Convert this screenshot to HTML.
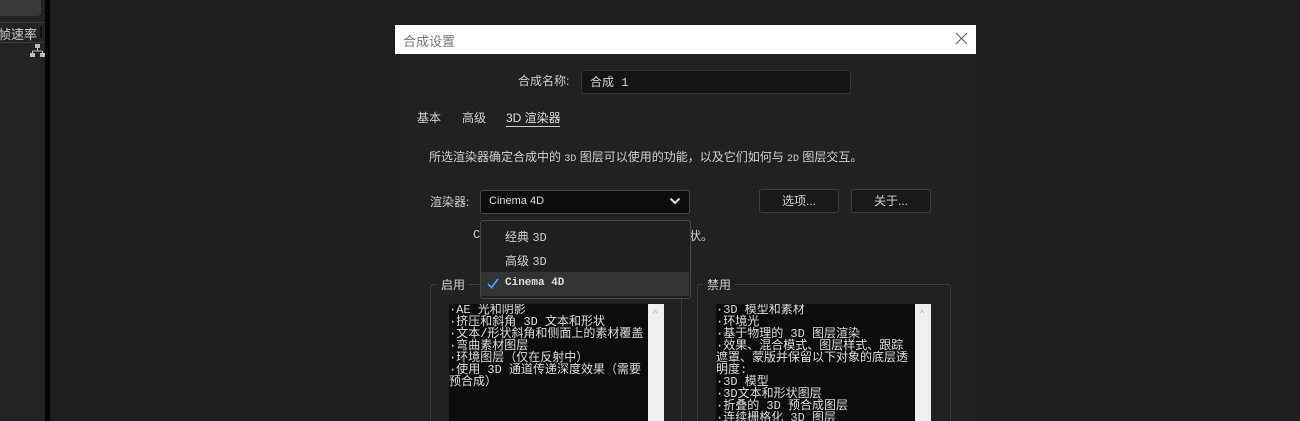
<!DOCTYPE html><html style="overflow:hidden;width:1300px;height:421px"><head><meta charset="utf-8"><style>
body{margin:0;width:1300px;height:421px;background:#1e1e1e;position:relative;overflow:hidden;font-family:"Liberation Sans","Noto Sans CJK SC",sans-serif;color:#cfcfcf;font-size:12px}
.a{position:absolute}
.mono{font-family:"Liberation Mono","Noto Sans CJK SC",monospace}
</style></head><body>
<div class="a" style="left:0;top:0;width:45px;height:421px;background:#232323"></div>
<div class="a" style="left:0;top:0;width:41px;height:16px;background:#3a3a3a;border-radius:0 0 3px 0"></div>
<div class="a" style="left:0;top:22px;width:45px;height:19px;border-top:1px solid #3a3a3a;border-bottom:1px solid #3a3a3a"></div>
<div class="a" style="left:-2px;top:24px;font-size:13px;color:#ccc">帧速率</div>
<div class="a" style="left:40px;top:26px;width:2px;height:12px;background:#111"></div>
<svg class="a" style="left:30px;top:44px" width="16" height="14"><rect x="5" y="0" width="5" height="4" fill="#bbb"/><path d="M7.5 4V7M2.5 7H12.5M2.5 7V9M12.5 7V9" stroke="#bbb"/><rect x="0" y="9" width="5" height="4" fill="#bbb"/><rect x="10" y="9" width="5" height="4" fill="#bbb"/></svg>
<div class="a" style="left:45px;top:0;width:5px;height:421px;background:#050505"></div>

<div class="a" style="left:395px;top:25px;width:581px;height:396px;background:#212121"></div>
<div class="a" style="left:395px;top:25px;width:581px;height:29px;background:#fff"></div>
<div class="a" style="left:403px;top:31px;font-size:13px;color:#777">合成设置</div>
<svg class="a" style="left:955px;top:32px" width="13" height="13"><path d="M1 1L12 12M12 1L1 12" stroke="#666" stroke-width="1.2"/></svg>

<div class="a" style="left:518px;top:72px;font-size:12px">合成名称:</div>
<div class="a" style="left:581px;top:70px;width:268px;height:22px;background:#151515;border:1px solid #333;border-radius:3px"></div>
<div class="a mono" style="left:590px;top:73px;font-size:12px">合成 1</div>

<div class="a" style="left:417px;top:109px">基本</div>
<div class="a" style="left:462px;top:109px">高级</div>
<div class="a" style="left:506px;top:109px;color:#ddd">3D 渲染器</div>
<div class="a" style="left:506px;top:126px;width:54px;height:1px;background:#ccc"></div>

<div class="a" style="left:429px;top:148px;font-size:12px">所选渲染器确定合成中的 <span class="mono" style="font-size:10px">3D</span> 图层可以使用的功能，以及它们如何与 <span class="mono" style="font-size:10px">2D</span> 图层交互。</div>

<div class="a" style="left:430px;top:193px">渲染器:</div>
<div class="a" style="left:480px;top:190px;width:208px;height:22px;background:#0d0d0d;border:1px solid #444;border-radius:3px"></div>
<div class="a" style="left:489px;top:195px;font-size:11px;color:#ddd">Cinema 4D</div>
<svg class="a" style="left:669px;top:197px" width="12" height="8"><path d="M1.5 1.5L6 6L10.5 1.5" stroke="#ddd" stroke-width="2" fill="none"/></svg>
<div class="a" style="left:759px;top:189px;width:78px;height:22px;background:#191919;border:1px solid #3a3a3a;border-radius:3px;text-align:center;line-height:22px">选项...</div>
<div class="a" style="left:851px;top:189px;width:78px;height:22px;background:#191919;border:1px solid #3a3a3a;border-radius:3px;text-align:center;line-height:22px">关于...</div>

<div class="a mono" style="left:473px;top:228px">C</div>
<div class="a" style="left:689px;top:227px">状。</div>

<div class="a" style="left:430px;top:284px;width:250px;height:137px;border:1px solid #3a3a3a;border-bottom:none;border-radius:3px 3px 0 0"></div>
<div class="a" style="left:437px;top:276px;background:#212121;padding:0 4px">启用</div>
<div class="a" style="left:697px;top:284px;width:252px;height:137px;border:1px solid #3a3a3a;border-bottom:none;border-radius:3px 3px 0 0"></div>
<div class="a" style="left:703px;top:276px;background:#212121;padding:0 4px">禁用</div>

<div class="a" style="left:449px;top:304px;width:200px;height:117px;background:#0c0c0c;overflow:hidden">
<div class="mono" style="width:200px;font-size:12px;line-height:12px;color:#ddd">·AE 光和阴影<br> ·挤压和斜角 3D 文本和形状<br> ·文本/形状斜角和侧面上的素材覆盖<br> ·弯曲素材图层<br> ·环境图层（仅在反射中）<br> ·使用 3D 通道传递深度效果（需要<br>预合成）</div></div>
<div class="a" style="left:648px;top:304px;width:16px;height:117px;background:#efefef"></div>
<div class="a" style="left:653px;top:308px;color:#aaa;font-size:9px">^</div>

<div class="a" style="left:716px;top:304px;width:200px;height:117px;background:#0c0c0c;overflow:hidden">
<div class="mono" style="width:198px;font-size:12px;line-height:12px;color:#ddd">·3D 模型和素材<br> ·环境光<br> ·基于物理的 3D 图层渲染<br> ·效果、混合模式、图层样式、跟踪遮罩、蒙版并保留以下对象的底层透明度:<br> ·3D 模型<br> ·3D文本和形状图层<br> ·折叠的 3D 预合成图层<br> ·连续栅格化 3D 图层</div></div>
<div class="a" style="left:915px;top:304px;width:16px;height:117px;background:#efefef"></div>
<div class="a" style="left:920px;top:308px;color:#aaa;font-size:9px">^</div>

<div class="a" style="left:480px;top:220px;width:209px;height:77px;background:#1f1f1f;border:1px solid #444;border-radius:3px"></div>
<div class="a" style="left:481px;top:272px;width:208px;height:24px;background:#333"></div>
<div class="a" style="left:505px;top:228px">经典 <span class="mono">3D</span></div>
<div class="a" style="left:505px;top:252px">高级 <span class="mono">3D</span></div>
<div class="a mono" style="left:505px;top:277px;font-weight:bold;font-size:11px;color:#ddd">Cinema 4D</div>
<svg class="a" style="left:487px;top:278px" width="12" height="11"><path d="M1 6L4.5 9.5L11 1" stroke="#4a9eff" stroke-width="1.8" fill="none"/></svg>
</body></html>
